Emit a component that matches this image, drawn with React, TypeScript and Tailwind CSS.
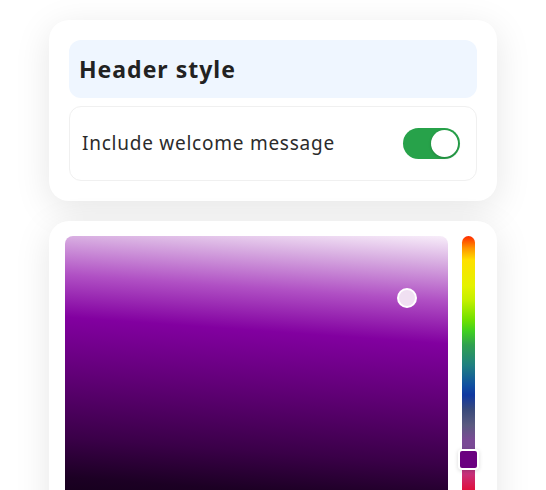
import { useState } from "react";

const FONT = { fontFamily: "'Noto Sans', 'Open Sans', Lato, sans-serif" };

const PAD_GRADIENT =
  "linear-gradient(184deg, #f8eefa 0%, #d9b0e2 8%, #b050c4 20%, #8200a0 33%, #620078 50%, #3a0048 70%, #1c0024 82%, #08000c 100%)";

const HUE_GRADIENT =
  "linear-gradient(to bottom, #ff2a00 0px, #ff9400 12px, #ffe000 24px, #e4f200 50px, #c4f000 64px, #70e000 84px, #40d020 95px, #30a050 109px, #208080 129px, #1050a0 149px, #1038a0 159px, #3a4a7a 174px, #5a5a80 189px, #7a4a95 204px, #7a4a95 212px, #c8307a 238px, #e0103c 254px, #ff1a20 300px)";

function Toggle({ on, onChange }: { on: boolean; onChange: () => void }) {
  return (
    <button
      type="button"
      onClick={onChange}
      className={`flex h-[31px] w-[57px] items-center rounded-full p-[2px] ${
        on ? "justify-end bg-[#27a24a]" : "justify-start bg-gray-300"
      }`}
    >
      <span className="h-[27px] w-[27px] rounded-full bg-white shadow-[0_1px_3px_rgba(0,0,0,0.2)]" />
    </button>
  );
}

export default function App() {
  const [welcome, setWelcome] = useState(true);

  return (
    <div className="h-[490px] overflow-hidden bg-white px-[49px] pt-5" style={FONT}>
      <div className="flex flex-col gap-5">
        {/* Header settings */}
        <section className="flex flex-col gap-2 rounded-[20px] bg-white p-5 shadow-[0_8px_36px_rgba(0,0,0,0.1)]">
          <div className="flex h-[58px] items-center rounded-xl bg-[#eff6ff] px-[10px]">
            <h2 className="text-[23px] font-bold tracking-[1px] text-[#222]">Header style</h2>
          </div>
          <div className="flex h-[75px] items-center justify-between rounded-xl border border-[#f0f0f0] pl-3 pr-[16px]">
            <span className="text-[19px] tracking-[0.75px] text-[#2b2b2b]">Include welcome message</span>
            <Toggle on={welcome} onChange={() => setWelcome(!welcome)} />
          </div>
        </section>

        {/* Color picker */}
        <section className="flex h-[320px] gap-[10px] rounded-[20px] bg-white pl-4 pr-[18px] pt-[15px] shadow-[0_8px_36px_rgba(0,0,0,0.1)]">
          <div
            className="relative h-[300px] w-[383px] rounded-lg"
            style={{ background: PAD_GRADIENT }}
          >
            <span className="absolute left-[332px] top-[52px] h-5 w-5 rounded-full border-2 border-white bg-[#f0e0f2]" />
          </div>
          <div className="relative flex w-[21px] justify-center">
            <div
              className="h-[300px] w-[13px] rounded-full"
              style={{ background: HUE_GRADIENT }}
            />
            <span className="absolute left-0 top-[213px] h-[21px] w-[21px] rounded-[4px] border-2 border-white bg-[#6a0080] shadow-[0_1px_4px_rgba(0,0,0,0.15)]" />
          </div>
        </section>
      </div>
    </div>
  );
}
